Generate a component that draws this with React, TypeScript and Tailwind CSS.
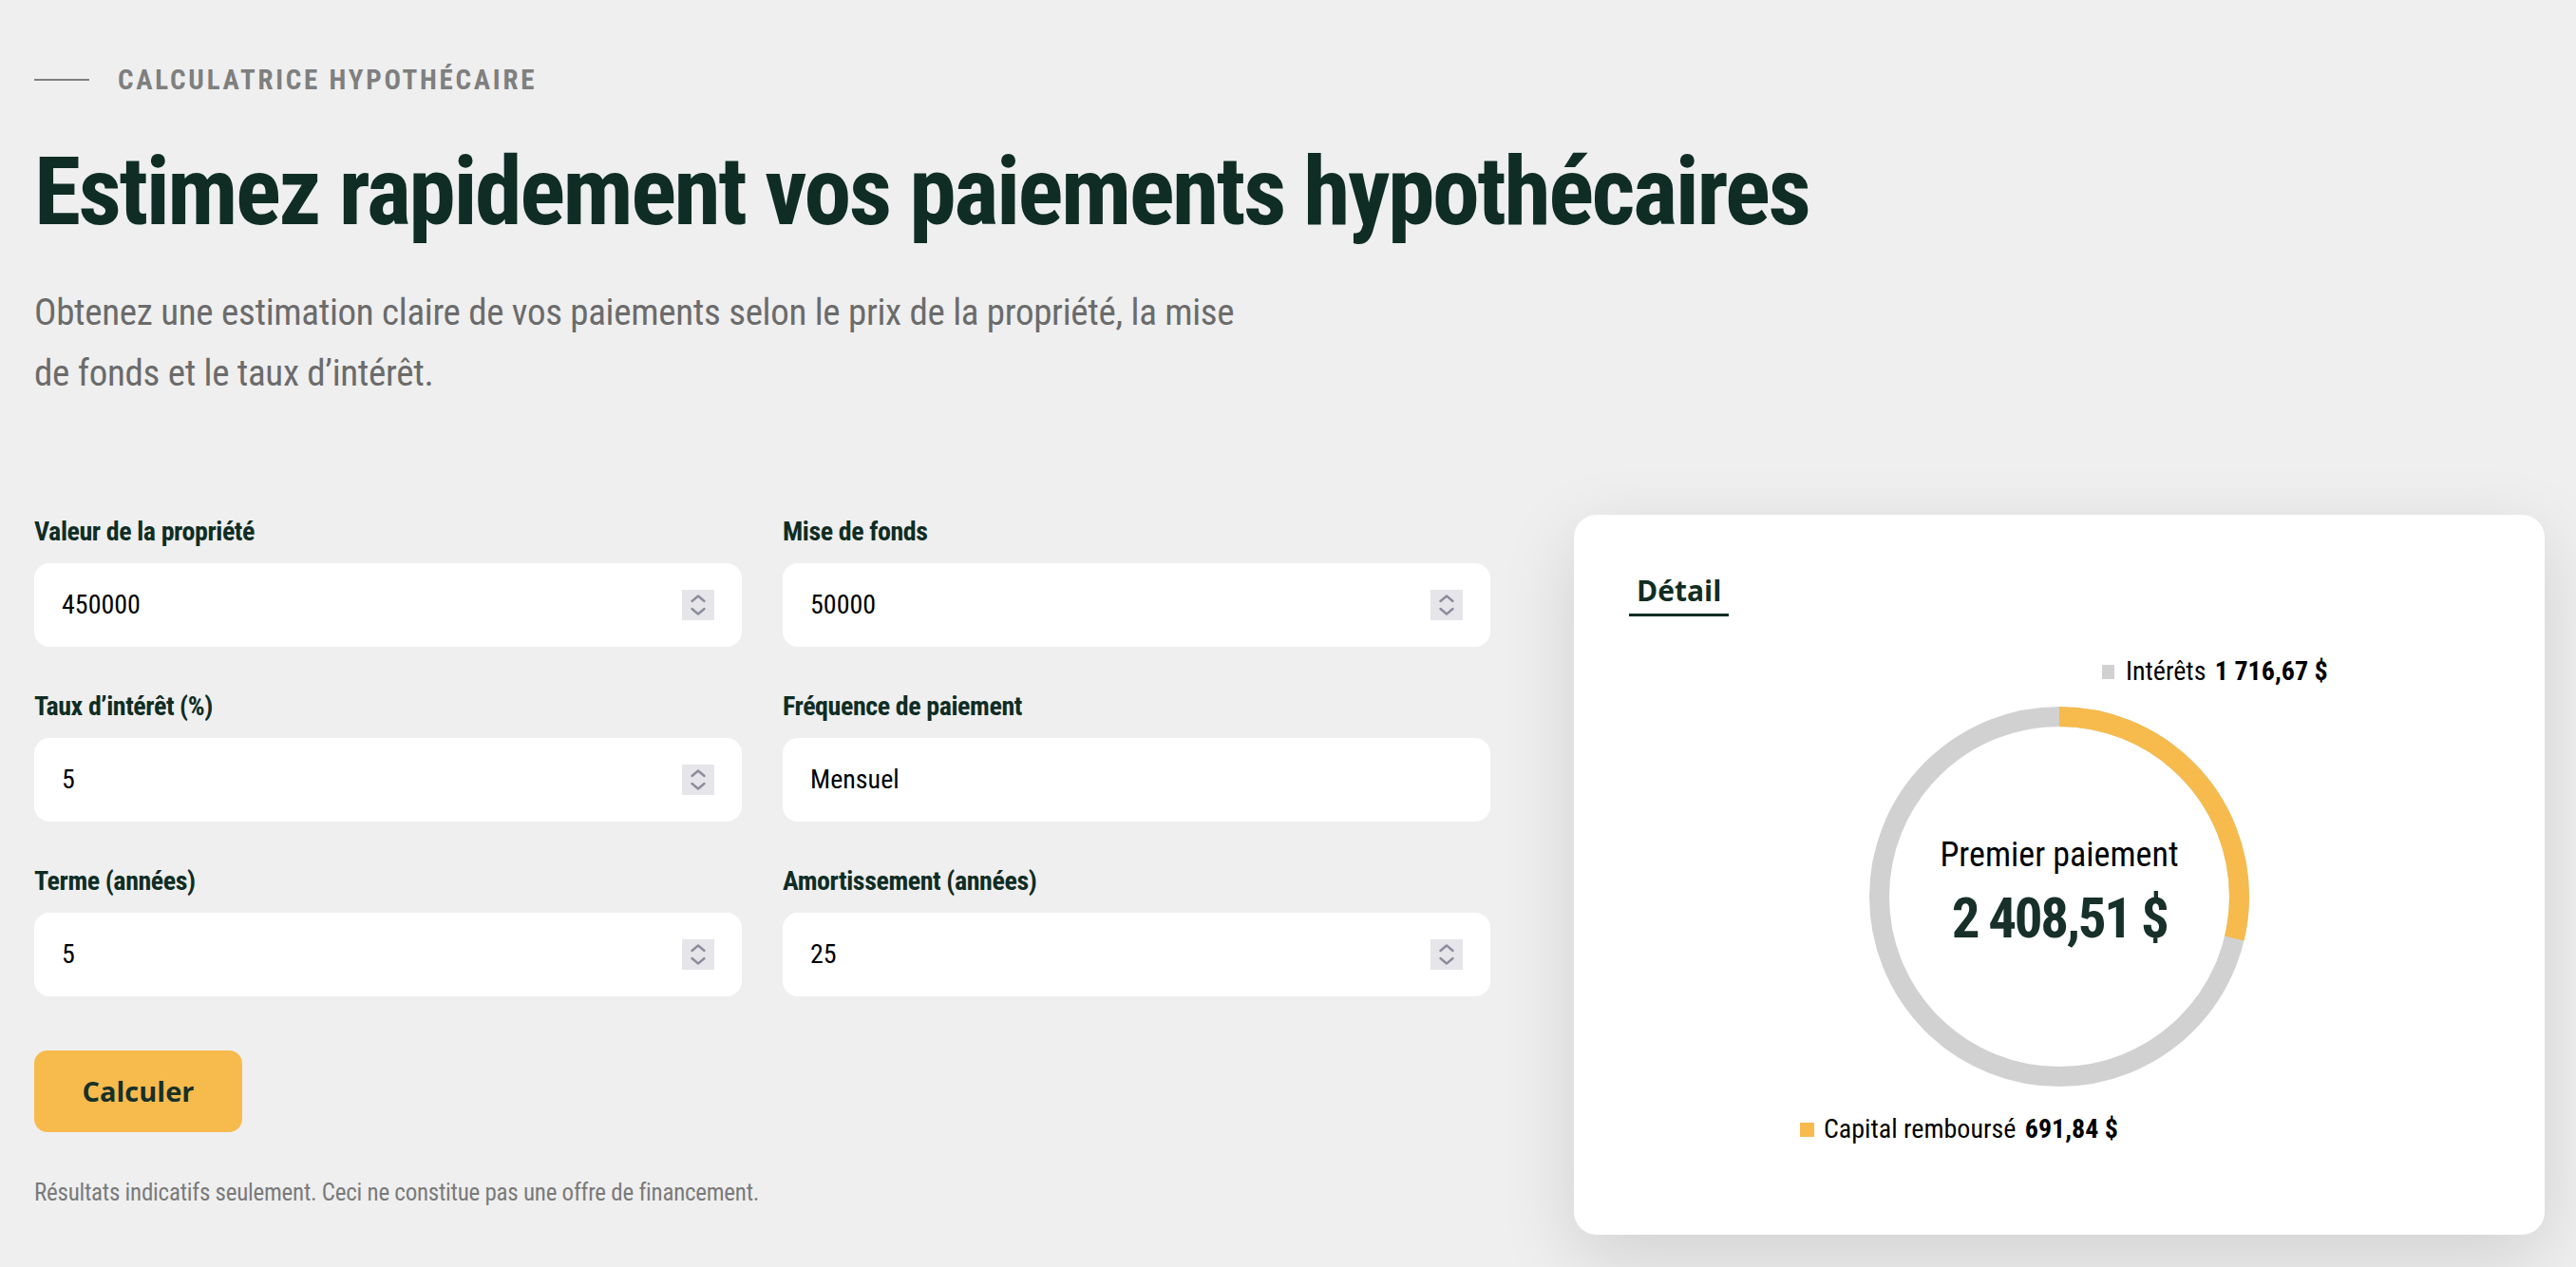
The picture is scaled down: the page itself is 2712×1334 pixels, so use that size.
import React from 'react';

// Roboto on its narrow width axis stands in for the condensed grotesk of the design
const cond = "font-['Roboto',sans-serif] font-stretch-[75%]";

const Spinner = () => (
  <div className="w-[34px] h-[32px] bg-[#e5e5ea] shrink-0">
    <svg width="34" height="32" viewBox="0 0 34 32" fill="none" stroke="#8c8c9c" strokeWidth="2.4" strokeLinecap="round" strokeLinejoin="round">
      <polyline points="10.5,12 17,6.5 23.5,12" />
      <polyline points="10.5,20 17,25.5 23.5,20" />
    </svg>
  </div>
);

interface Field {
  label: string;
  value: string;
  spinner?: boolean;
}

const FieldBox = ({ field }: { field: Field }) => (
  <div className="flex flex-col">
    <label className={`${cond} text-[28px] leading-[36px] font-bold tracking-[-0.015em] text-[#0f2d24]`}>{field.label}</label>
    <div className="mt-[15px] h-[88px] bg-white rounded-[16px] flex items-center justify-between pl-[29px] pr-[29px]">
      <span className="font-['Roboto',sans-serif] font-stretch-[85%] text-[28px] text-black">{field.value}</span>
      {field.spinner && <Spinner />}
    </div>
  </div>
);

const Donut = () => {
  const r = 189.5;
  const c = 2 * Math.PI * r;
  const share = 691.84 / 2408.51;
  return (
    <div className="relative w-[400px] h-[400px]">
      <svg width="400" height="400" viewBox="0 0 400 400">
        <circle cx="200" cy="200" r={r} fill="none" stroke="#d1d1d1" strokeWidth="21" />
        <circle
          cx="200"
          cy="200"
          r={r}
          fill="none"
          stroke="#f6bb4c"
          strokeWidth="21"
          strokeDasharray={`${c * share} ${c}`}
          transform="rotate(-90 200 200)"
        />
      </svg>
      <div className="absolute inset-0 flex flex-col items-center pt-[134px]">
        <p className="font-['Roboto',sans-serif] font-stretch-[80%] text-[36px] leading-[44px] text-black">Premier paiement</p>
        <p className={`${cond} mt-[12px] text-[59px] leading-[66px] font-bold tracking-[-0.04em] text-[#17302a]`}>2 408,51 $</p>
      </div>
    </div>
  );
};

export default function App() {
  const fields: Field[] = [
    { label: 'Valeur de la propriété', value: '450000', spinner: true },
    { label: 'Mise de fonds', value: '50000', spinner: true },
    { label: 'Taux d’intérêt (%)', value: '5', spinner: true },
    { label: 'Fréquence de paiement', value: 'Mensuel' },
    { label: 'Terme (années)', value: '5', spinner: true },
    { label: 'Amortissement (années)', value: '25', spinner: true },
  ];

  return (
    <div className="min-h-screen bg-[#efefef] pl-[36px] pr-[33px] pt-[66px] pb-[40px]">
      {/* Header */}
      <div className="flex items-center gap-[30px] h-[36px]">
        <span className="w-[58px] h-[2px] bg-[#808080]" />
        <span className={`${cond} text-[29px] leading-[36px] font-bold tracking-[0.095em] text-[#7f7f7f]`}>CALCULATRICE HYPOTHÉCAIRE</span>
      </div>
      <h1 className={`${cond} mt-[45px] text-[100px] leading-[110px] font-bold text-[#0f2d24] tracking-[-0.025em]`}>
        Estimez rapidement vos paiements hypothécaires
      </h1>
      <p className={`${cond} mt-[40px] max-w-[1290px] text-[39px] leading-[64px] tracking-[-0.008em] text-[#6b6b6b]`}>
        Obtenez une estimation claire de vos paiements selon le prix de la propriété, la mise de fonds et le taux d’intérêt.
      </p>

      <div className="mt-[117px] flex gap-[88px] items-start">
        {/* Form */}
        <div className="flex-1">
          <div className="grid grid-cols-2 gap-x-[43px] gap-y-[45px]">
            {fields.map(f => <FieldBox key={f.label} field={f} />)}
          </div>
          <button className="mt-[57px] w-[219px] h-[86px] rounded-[14px] bg-[#f6bb4c] font-['Open_Sans',sans-serif] font-bold text-[29px] text-[#17302a]">
            Calculer
          </button>
          <p className="font-['Roboto',sans-serif] font-stretch-[80%] mt-[48px] text-[25px] leading-[32px] tracking-[-0.01em] text-[#7a7a7a]">
            Résultats indicatifs seulement. Ceci ne constitue pas une offre de financement.
          </p>
        </div>

        {/* Result card */}
        <div className="w-[1022px] h-[758px] shrink-0 bg-white rounded-[24px] shadow-[0_24px_80px_rgba(0,0,0,0.13)] pt-[60px] px-[58px]">
          <div className="inline-block px-[8px] pb-[4px] border-b-[3px] border-[#0f2d24]">
            <span className="font-['Open_Sans',sans-serif] font-bold text-[30px] leading-[40px] text-[#0f2d24]">Détail</span>
          </div>
          <div className="flex flex-col">
            <div className={`${cond} mt-[41px] ml-[498px] flex items-center gap-[12px] text-[28px] leading-[34px] text-black`}>
              <span className="w-[13px] h-[15px] bg-[#d1d1d1]" />
              <span>Intérêts <b className="font-bold ml-[3px]">1 716,67 $</b></span>
            </div>
            <div className="mt-[20px] ml-[253px]">
              <Donut />
            </div>
            <div className={`${cond} mt-[28px] ml-[180px] flex items-center gap-[10px] text-[28px] leading-[34px] text-black`}>
              <span className="w-[15px] h-[15px] bg-[#f6bb4c]" />
              <span>Capital remboursé <b className="font-bold ml-[3px]">691,84 $</b></span>
            </div>
          </div>
        </div>
      </div>
    </div>
  );
}
